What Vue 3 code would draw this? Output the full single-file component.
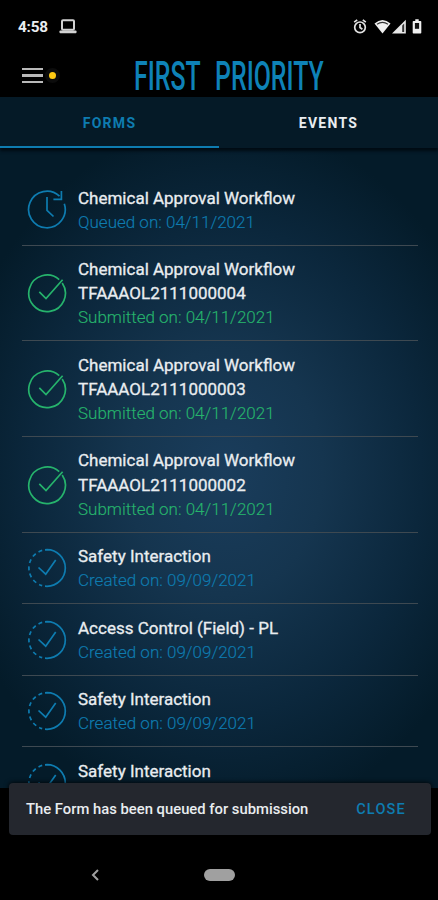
<template>
  <div class="phone">
    <header class="status-bar">
      <span class="clock">4:58</span>
      <svg class="laptop" width="18" height="16" viewBox="0 0 18 16">
        <rect x="3" y="1.2" width="12" height="9.6" rx="1" fill="none" stroke="#d2d2d2" stroke-width="2" />
        <rect x="0.5" y="11.5" width="17" height="2.8" rx="0.8" fill="#d2d2d2" />
      </svg>
      <svg class="signals" width="72" height="18" viewBox="0 0 72 18">
        <g fill="none" stroke="#e2e2e2" stroke-width="1.7">
          <circle cx="8" cy="9.3" r="5.3" />
          <path d="M8 6v3.5l2.4 1.7M2.2 4.1l3-2.3M13.8 4.1l-3-2.3" />
        </g>
        <path d="M22.5 5.5Q30.5 -1.5 38.5 5.5L30.5 15.5Z" fill="#f0f0f0" />
        <path d="M25 6.2Q30.5 2.6 36 6.2" fill="none" stroke="#333" stroke-width="1.1" />
        <path d="M40 15.5L53.8 1.8v13.7Z" fill="#e8e8e8" />
        <path d="M50.2 7.5v6.5h2V5.5Z" fill="#333" />
        <path d="M61.5 3h1.8V1.2h3.4V3h1.8q.8 0 .8.8v10.900q0 .8-.8.8h-7q-.8 0-.8-.8V3.800q0-.8.8-.8Z" fill="#f0f0f0" />
        <rect x="62.9" y="5" width="4.2" height="5.8" fill="#111" />
      </svg>
    </header>

    <div class="app-bar">
      <div class="menu"><i></i><i></i><i></i></div>
      <span class="dot"></span>
      <h1 class="brand">
        <span>FIRST</span>
        <span>PRIORITY</span>
      </h1>
    </div>

    <main class="content">
      <nav class="tabs">
        <button class="tab active">FORMS</button>
        <button class="tab">EVENTS</button>
      </nav>

      <ul class="forms">
        <li v-for="(form, i) in forms" :key="i" class="form" :class="form.status">
          <svg class="icon" width="40" height="40" viewBox="0 0 40 40">
            <template v-if="form.status === 'queued'">
              <path d="M32.5 6.2A18.3 18.3 0 1 0 37.3 13.8" />
              <path d="M34.4 1V9.3H26.4M20 7V20.3L26.5 26.5" />
            </template>
            <template v-else-if="form.status === 'submitted'">
              <path d="M32.2 6.6A18.3 18.3 0 1 0 35.2 10" />
              <path d="M12.3 18.8L19 25.5L35.6 6.8" />
            </template>
            <template v-else>
              <path d="M18 1.8L20 1.7A18.3 18.3 0 0 1 20 38.3L18 38.2" />
              <path d="M15.2 2.4A18.3 18.3 0 0 0 15.2 37.6" stroke-dasharray="4 3.3" />
              <path d="M11.5 19.5L18.7 26.2L28.7 12" />
            </template>
          </svg>
          <div class="text">
            <p class="name">{{ form.name }}</p>
            <p v-if="form.code" class="name code">{{ form.code }}</p>
            <p class="date">{{ labels[form.status] }} on: {{ form.date }}</p>
          </div>
        </li>
      </ul>
    </main>

    <div class="snackbar">
      <span>The Form has been queued for submission</span>
      <button class="close">CLOSE</button>
    </div>

    <footer class="nav-bar">
      <svg class="back" width="10" height="14" viewBox="0 0 10 14">
        <path d="M8 2L3 7L8 12" fill="none" stroke="#a0a0a0" stroke-width="2" />
      </svg>
      <span class="home"></span>
    </footer>
  </div>
</template>

<script setup>
const labels = {
  queued: 'Queued',
  submitted: 'Submitted',
  created: 'Created',
}

const forms = [
  { name: 'Chemical Approval Workflow', status: 'queued', date: '04/11/2021' },
  { name: 'Chemical Approval Workflow', code: 'TFAAAOL2111000004', status: 'submitted', date: '04/11/2021' },
  { name: 'Chemical Approval Workflow', code: 'TFAAAOL2111000003', status: 'submitted', date: '04/11/2021' },
  { name: 'Chemical Approval Workflow', code: 'TFAAAOL2111000002', status: 'submitted', date: '04/11/2021' },
  { name: 'Safety Interaction', status: 'created', date: '09/09/2021' },
  { name: 'Access Control (Field) - PL', status: 'created', date: '09/09/2021' },
  { name: 'Safety Interaction', status: 'created', date: '09/09/2021' },
  { name: 'Safety Interaction', status: 'created', date: '09/09/2021' },
]
</script>

<style>
body {
  margin: 0;
  background: #000;
}
</style>

<style scoped>
.phone {
  position: relative;
  display: flex;
  flex-direction: column;
  width: 438px;
  height: 900px;
  overflow: hidden;
  background: #000;
  color: #e9edf0;
  font-family: Roboto, "Liberation Sans", sans-serif;
}

.status-bar {
  display: flex;
  align-items: center;
  box-sizing: border-box;
  height: 54px;
  padding: 0 14px 0 18px;
}

.clock {
  width: 41px;
  font-size: 15.3px;
  font-weight: 700;
  letter-spacing: -0.2px;
}

.signals {
  margin-left: auto;
}

.app-bar {
  display: flex;
  align-items: center;
  height: 43px;
  padding-left: 22px;
}

.menu {
  display: flex;
  flex: none;
  flex-direction: column;
  gap: 4px;
  width: 21px;
}

.menu i {
  height: 2.5px;
  background: #b9b9b9;
}

.dot {
  flex: none;
  width: 7px;
  height: 7px;
  margin: 0 78px 0 6px;
  border-radius: 50%;
  background: #fdc913;
  box-shadow: 0 0 0 4px #0c0c0c;
}

/* condensed wordmark */
.brand {
  display: flex;
  flex: none;
  gap: 24px;
  margin: 0;
  color: #0e82b7;
  font-size: 41.5px;
  font-weight: 500;
  line-height: 42px;
  white-space: nowrap;
  transform: scaleX(0.6);
  transform-origin: left;
}

.content {
  height: 691px;
  overflow: hidden;
  background: radial-gradient(ellipse 280px 350px at 225px 375px, #1a3d5c 0%, #15354f 35%, #0b273c 70%, #041b29 100%);
}

.tabs {
  display: flex;
  height: 51px;
  background: #051a27;
  box-shadow: 0 3px 3px #010b13;
}

.tab {
  flex: 1;
  padding: 3px 0 0;
  border: 0;
  border-bottom: 2px solid transparent;
  background: none;
  color: #e9edf0;
  font: 700 14px Roboto, sans-serif;
  letter-spacing: 1.3px;
}

.tab.active {
  border-color: #0e7cb0;
  color: #0e7cb0;
}

.forms {
  margin: 0;
  padding: 26px 20px 0 22px;
  list-style: none;
}

.form {
  display: flex;
  align-items: center;
  padding: 11.5px 0 10.9px 5px;
  border-bottom: 1px solid #3e4951;
  color: #0e7cb0;
}

.submitted {
  color: #26b36c;
}

.icon {
  flex: none;
  margin-right: 11px;
  fill: none;
  stroke: currentColor;
  stroke-width: 1.7;
}

.text p {
  margin: 0;
  font-size: 17px;
  line-height: 24.1px;
  white-space: nowrap;
}

.text .name {
  color: #e9edf0;
  -webkit-text-stroke: 0.3px #e9edf0;
}

.text .date {
  font-weight: 300;
  -webkit-text-stroke: 0.15px currentColor;
}

.snackbar {
  position: absolute;
  top: 783px;
  left: 9px;
  display: flex;
  align-items: center;
  justify-content: space-between;
  box-sizing: border-box;
  width: 422px;
  height: 52px;
  padding: 0 25px 0 17px;
  border-radius: 4px;
  background: #24272e;
  box-shadow: 0 0 5px #000;
  font-size: 14.8px;
  font-weight: 500;
}

.close {
  padding: 0;
  border: 0;
  background: none;
  color: #0e7cb0;
  font: 500 14.5px Roboto, sans-serif;
  letter-spacing: 1.2px;
}

.nav-bar {
  display: flex;
  align-items: center;
  height: 12px;
  margin-top: 81px;
  padding-left: 90px;
}

.home {
  width: 31px;
  height: 12px;
  margin-left: 104px;
  border-radius: 6px;
  background: #a0a0a0;
}
</style>
